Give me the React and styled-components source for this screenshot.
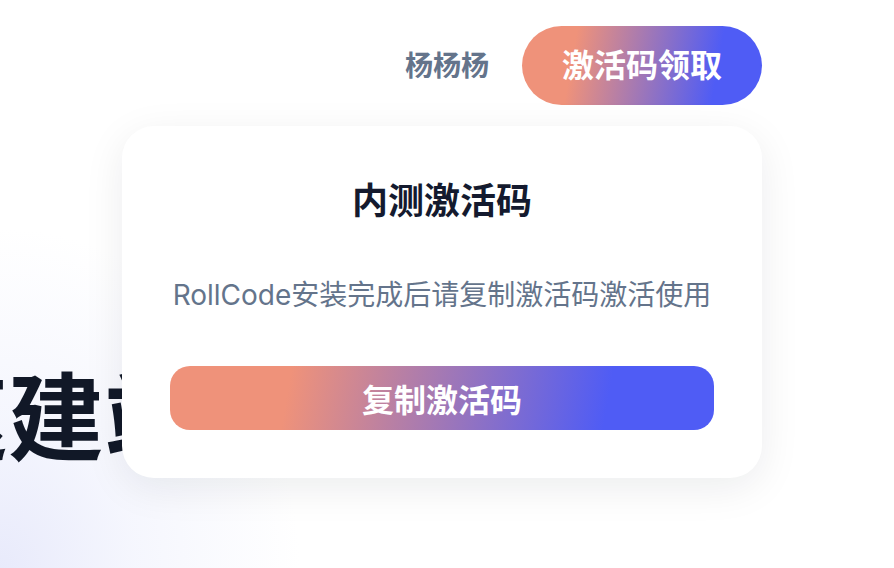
import React from 'react';
import styled, { createGlobalStyle } from 'styled-components';

const GlobalStyle = createGlobalStyle`
    html, body {
        margin: 0;
        padding: 0;
    }
    body {
        font-family: "Inter", "Noto Sans CJK SC", sans-serif;
        -webkit-font-smoothing: antialiased;
    }
    * {
        box-sizing: border-box;
    }
`;

const gradient = 'linear-gradient(100deg, #ef927a 22%, #4f5cf5 80%)';

const Page = styled.div`
    position: relative;
    width: 100%;
    height: 100vh;
    overflow: hidden;
    background:
        radial-gradient(ellipse 300px 340px at 0% 100%, #e8eafb 0%, rgba(240, 242, 253, 0.65) 45%, rgba(255, 255, 255, 0) 100%),
        #ffffff;
`;

const Header = styled.header`
    display: flex;
    justify-content: flex-end;
    align-items: center;
    gap: 33px;
    padding: 26px 132px 0 0;
`;

const UserName = styled.span`
    font-size: 28px;
    font-weight: 700;
    color: #64748b;
    line-height: 1;
`;

const MenuAnchor = styled.div`
    position: relative;
`;

const ClaimButton = styled.button`
    height: 79px;
    padding: 0 40px;
    border: none;
    border-radius: 40px;
    background: ${ gradient };
    color: #ffffff;
    font-family: inherit;
    font-size: 32px;
    font-weight: 700;
    line-height: 1;
    cursor: pointer;
`;

const Popover = styled.div`
    position: absolute;
    top: calc(100% + 21px);
    right: 0;
    width: 640px;
    padding: 48px;
    border-radius: 32px;
    background: #ffffff;
    box-shadow: 0 10px 40px rgba(15, 23, 42, 0.08);
    display: flex;
    flex-direction: column;
    align-items: stretch;
    text-align: center;
    z-index: 2;
`;

const PopoverTitle = styled.h3`
    margin: 0 0 46px;
    font-size: 36px;
    line-height: 54px;
    font-weight: 700;
    color: #141a2e;
`;

const PopoverText = styled.p`
    margin: 0 0 50px;
    font-size: 28px;
    line-height: 42px;
    font-weight: 400;
    color: #64748b;
    white-space: nowrap;
`;

const CopyButton = styled.button`
    height: 64px;
    border: none;
    border-radius: 20px;
    background: ${ gradient };
    color: #ffffff;
    font-family: inherit;
    font-size: 32px;
    font-weight: 700;
    cursor: pointer;
`;

const Hero = styled.section`
    padding-top: 265px;
    margin-left: -88px;
`;

const HeroTitle = styled.h1`
    margin: 0;
    font-size: 96px;
    line-height: 1;
    font-weight: 700;
    color: #111827;
    white-space: nowrap;
`;

const App = () => (
    <Page>
        <GlobalStyle/>
        <Header>
            <UserName>杨杨杨</UserName>
            <MenuAnchor>
                <ClaimButton>激活码领取</ClaimButton>
                <Popover>
                    <PopoverTitle>内测激活码</PopoverTitle>
                    <PopoverText>RollCode安装完成后请复制激活码激活使用</PopoverText>
                    <CopyButton>复制激活码</CopyButton>
                </Popover>
            </MenuAnchor>
        </Header>
        <Hero>
            <HeroTitle>速建站，快速上线</HeroTitle>
        </Hero>
    </Page>
);

export default App;
